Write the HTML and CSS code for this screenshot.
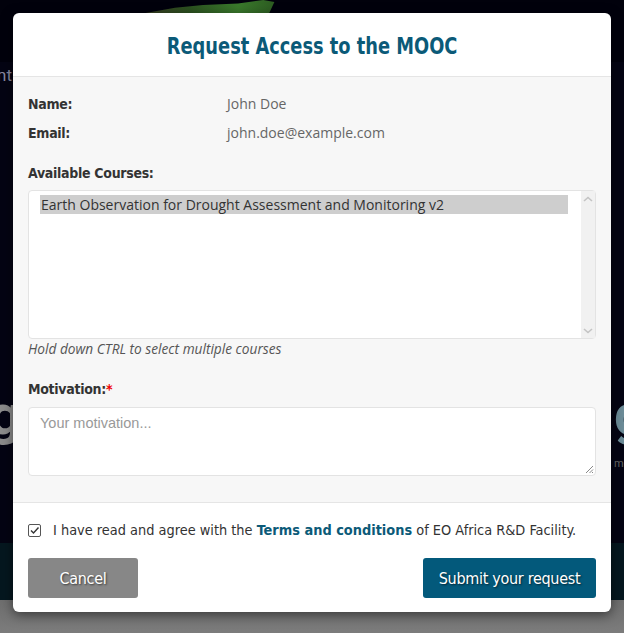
FILE: index.html
```html
<!DOCTYPE html>
<html lang="en">
<head>
<meta charset="utf-8">
<title>Request Access to the MOOC</title>
<link rel="stylesheet" href="styles.css">
</head>
<body>
<div class="page">
  <div class="hero">
    <div class="hero-img"></div>
  </div>
  <div class="hero-lower">
    <div class="crumb">nt</div>
    <div class="big-row"><span class="big-left">g</span><span class="big-right">g</span></div>
    <div class="small-row"><span>mo</span></div>
  </div>
  <div class="teal-band"></div>
  <div class="gray-band"></div>
</div>

<div class="modal">
  <div class="modal-header">
    <h2 class="modal-title">Request Access to the MOOC</h2>
  </div>
  <div class="modal-body">
    <div class="info-row"><span class="label">Name:</span><span class="value">John Doe</span></div>
    <div class="info-row"><span class="label">Email:</span><span class="value">john.doe@example.com</span></div>

    <div class="label section-label">Available Courses:</div>
    <div class="select-box">
      <div class="options">
        <div class="option selected">Earth Observation for Drought Assessment and Monitoring v2</div>
      </div>
      <div class="scrollbar">
        <svg class="chev" width="10" height="6" viewBox="0 0 10 6"><path d="M1 5 L5 1.5 L9 5" fill="none" stroke="#c4c4c4" stroke-width="1.6"/></svg>
        <svg class="chev" width="10" height="6" viewBox="0 0 10 6"><path d="M1 1 L5 4.5 L9 1" fill="none" stroke="#c4c4c4" stroke-width="1.6"/></svg>
      </div>
    </div>
    <div class="hint">Hold down CTRL to select multiple courses</div>

    <div class="label section-label motivation-label">Motivation:<span class="req">*</span></div>
    <div class="textarea">
      <span class="placeholder">Your motivation...</span>
      <svg class="grip" width="9" height="9" viewBox="0 0 9 9"><path d="M8 1 L1 8 M8 4.5 L4.5 8 M8 7 L7 8" stroke="#888" stroke-width="1"/></svg>
    </div>
  </div>
  <div class="modal-footer">
    <div class="agree">
      <span class="checkbox"><svg width="11" height="11" viewBox="0 0 11 11"><path d="M2 5.5 L4.5 8 L9.5 2.5" fill="none" stroke="#333" stroke-width="1.4"/></svg></span>
      <span class="agree-text">I have read and agree with the <a class="terms">Terms and conditions</a> of EO Africa R&amp;D Facility.</span>
    </div>
    <div class="actions">
      <button class="btn btn-cancel">Cancel</button>
      <button class="btn btn-submit">Submit your request</button>
    </div>
  </div>
</div>
</body>
</html>
```

FILE: styles.css
```css
* { box-sizing: border-box; }

html, body {
  margin: 0;
  padding: 0;
  width: 624px;
  height: 633px;
  overflow: hidden;
}

body {
  background: #02020e;
  font-family: "Open Sans", sans-serif;
  position: relative;
}

/* ---------- background page ---------- */
.page {
  display: flex;
  flex-direction: column;
  height: 633px;
}

.hero {
  height: 62px;
  background: #01010c;
  display: flex;
  justify-content: flex-start;
  padding-left: 140px;
}

.hero-img {
  width: 140px;
  height: 14px;
  background: linear-gradient(90deg, #3a3a22 0%, #2c5120 35%, #3a7a2c 70%, #2b5820 100%);
  clip-path: polygon(0 100%, 25% 55%, 45% 35%, 70% 25%, 88% 0, 96% 15%, 92% 100%);
}

.hero-lower {
  flex: 1;
  background: #040413;
  display: flex;
  flex-direction: column;
  font-family: "Roboto", sans-serif;
}

.crumb {
  color: #8a8aa0;
  font-size: 17px;
  margin-top: 3px;
  margin-left: -3px;
  line-height: 20px;
}

.big-row {
  margin-top: 302px;
  display: flex;
  justify-content: space-between;
  font-weight: 700;
  font-size: 56px;
  line-height: 56px;
}

.big-left { color: #8c8c8c; margin-left: -11px; }
.big-right { color: #6c8c98; margin-right: -22px; }

.small-row {
  display: flex;
  justify-content: flex-end;
  color: #666;
  font-size: 11px;
  margin-top: 14px;
  margin-right: -6px;
}

.teal-band {
  height: 57px;
  background: #05171f;
}

.gray-band {
  height: 33px;
  background: linear-gradient(180deg, #6e6e6e, #7c7c7c);
}

/* ---------- modal ---------- */
.modal {
  position: absolute;
  left: 13px;
  top: 13px;
  width: 598px;
  height: 599px;
  background: #fff;
  border-radius: 6px;
  overflow: hidden;
  display: flex;
  flex-direction: column;
  box-shadow: 0 3px 12px rgba(0,0,0,0.5);
}

.modal-header {
  height: 64px;
  border-bottom: 1px solid #e5e5e5;
  display: flex;
  align-items: center;
  justify-content: center;
}

.modal-title {
  margin: 0;
  font-family: "DejaVu Sans Condensed", "Roboto Condensed", "Liberation Sans Narrow", sans-serif;
  font-weight: 700;
  font-size: 22.5px;
  color: #0b5a78;
  transform: scaleX(0.88);
  padding-top: 2px;
  white-space: nowrap;
}

.modal-body {
  background: #f7f7f7;
  padding: 17px 15px 26px;
  display: flex;
  flex-direction: column;
}

.label {
  font-family: "DejaVu Sans Condensed", "Roboto Condensed", "Liberation Sans Narrow", sans-serif;
  font-weight: 700;
  font-size: 14px;
  letter-spacing: -0.3px;
  color: #333;
}

.info-row {
  display: grid;
  grid-template-columns: 199px 1fr;
  line-height: 20px;
  margin-bottom: 9px;
}

.value {
  font-size: 14px;
  color: #666;
  letter-spacing: 0;
}

.section-label {
  line-height: 20px;
  margin-top: 11px;
  margin-bottom: 7px;
}

.select-box {
  height: 149px;
  background: #fff;
  border: 1px solid #e3e3e3;
  border-radius: 4px;
  display: flex;
}

.options {
  flex: 1;
  padding: 4px 13px 0 11px;
}

.option {
  font-size: 14px;
  color: #333;
  line-height: 19px;
  height: 19px;
  padding-left: 1px;
  white-space: nowrap;
}

.option.selected { background: #cecece; }

.scrollbar {
  width: 14px;
  background: #f1f1f1;
  display: flex;
  flex-direction: column;
  justify-content: space-between;
  align-items: center;
  padding: 5px 0 4px;
}

.hint {
  font-style: italic;
  font-size: 13.7px;
  color: #555;
  line-height: 18px;
  margin-top: 1px;
}

.motivation-label {
  margin-top: 21px;
  margin-bottom: 8px;
}

.req { color: #e00; }

.textarea {
  height: 69px;
  background: #fff;
  border: 1px solid #e3e3e3;
  border-radius: 4px;
  position: relative;
  padding: 3px 11px;
}

.placeholder {
  font-family: "Liberation Sans", Arial, sans-serif;
  font-size: 14.5px;
  color: #999;
  line-height: 20px;
}

.grip {
  position: absolute;
  right: 1px;
  bottom: 1px;
}

/* ---------- footer ---------- */
.modal-footer {
  flex: 1;
  border-top: 1px solid #e5e5e5;
  padding: 17px 15px 14px;
  display: flex;
  flex-direction: column;
  gap: 18px;
}

.agree {
  display: flex;
  align-items: center;
  gap: 12px;
  height: 20px;
}

.checkbox {
  width: 13px;
  height: 13px;
  border: 1px solid #555;
  border-radius: 2px;
  display: flex;
  align-items: center;
  justify-content: center;
  background: #fff;
  flex: none;
}

.agree-text {
  font-family: "DejaVu Sans Condensed", "Roboto Condensed", "Liberation Sans Narrow", sans-serif;
  font-size: 14.4px;
  color: #333;
  white-space: nowrap;
}

.terms {
  color: #0b5a78;
  font-weight: 700;
}

.actions {
  display: flex;
  justify-content: space-between;
}

.btn {
  height: 40px;
  border: none;
  border-radius: 3px;
  color: #fff;
  font-family: "DejaVu Sans Condensed", "Roboto Condensed", "Liberation Sans Narrow", sans-serif;
  font-size: 16px;
  letter-spacing: -0.3px;
  text-shadow: 1px 1px 2px rgba(0,0,0,0.6);
  padding: 0;
}

.btn-cancel {
  width: 110px;
  background: #878787;
}

.btn-submit {
  width: 173px;
  background: #03597b;
}
```
